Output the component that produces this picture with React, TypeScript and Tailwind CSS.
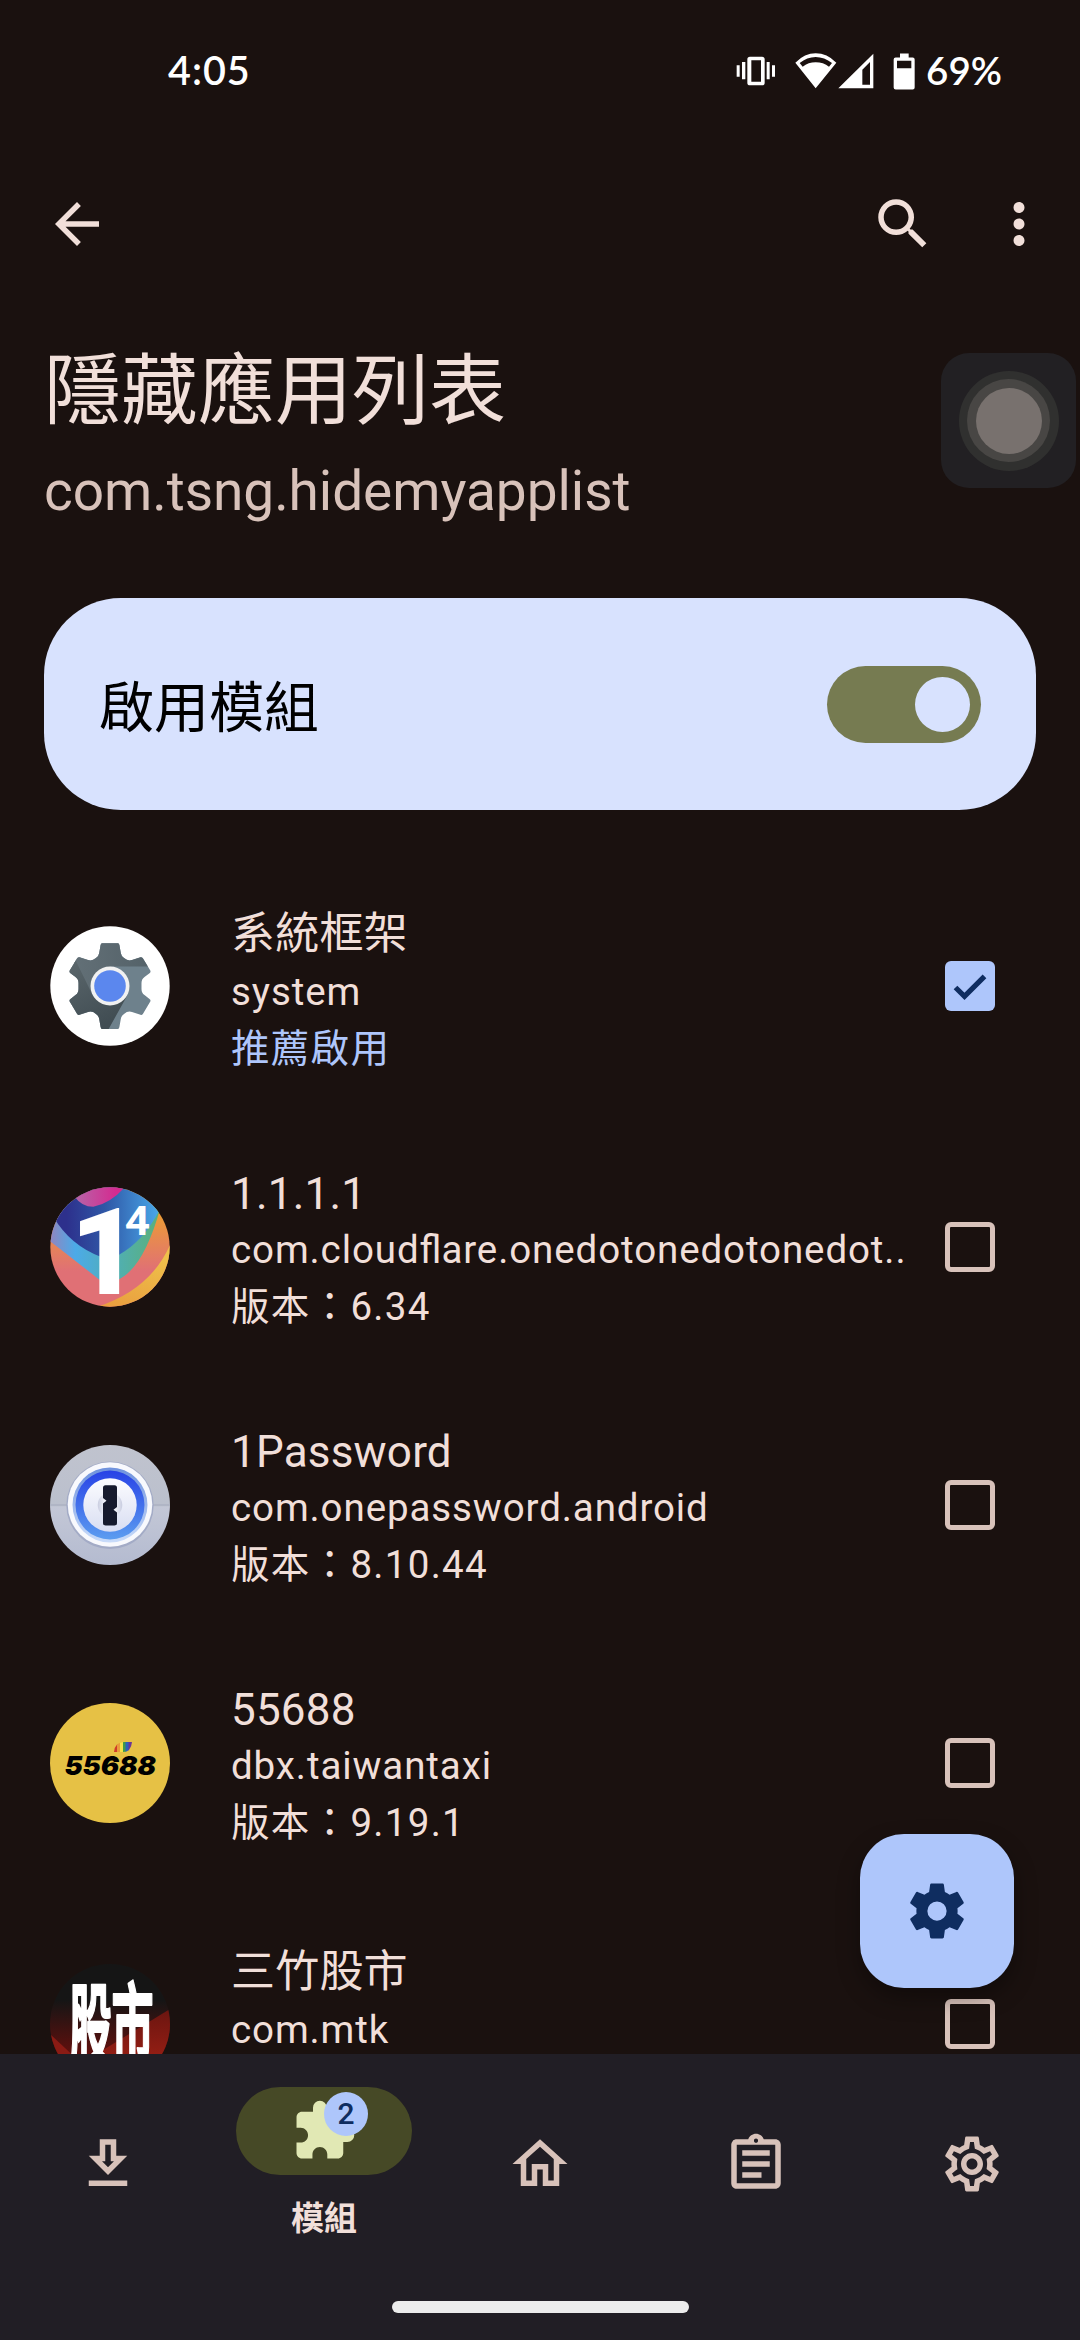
import type { ReactNode } from "react";
import { MdArrowBack, MdSearch, MdMoreVert, MdExtension, MdOutlineAssignment, MdOutlineSettings } from "react-icons/md";

const COG =
  "M12,15.5A3.5,3.5 0 0,1 8.5,12A3.5,3.5 0 0,1 12,8.5A3.5,3.5 0 0,1 15.5,12A3.5,3.5 0 0,1 12,15.5M19.43,12.97C19.47,12.65 19.5,12.33 19.5,12C19.5,11.67 19.47,11.34 19.43,11L21.54,9.37C21.73,9.22 21.78,8.95 21.66,8.73L19.66,5.27C19.54,5.05 19.27,4.96 19.05,5.05L16.56,6.05C16.04,5.66 15.5,5.32 14.87,5.07L14.5,2.42C14.46,2.18 14.25,2 14,2H10C9.75,2 9.54,2.18 9.5,2.42L9.13,5.07C8.5,5.32 7.96,5.66 7.44,6.05L4.95,5.05C4.73,4.96 4.46,5.05 4.34,5.27L2.34,8.73C2.21,8.95 2.27,9.22 2.46,9.37L4.57,11C4.53,11.34 4.5,11.67 4.5,12C4.5,12.33 4.53,12.65 4.57,12.97L2.46,14.63C2.27,14.78 2.21,15.05 2.34,15.27L4.34,18.73C4.46,18.95 4.73,19.03 4.95,18.95L7.44,17.94C7.96,18.34 8.5,18.68 9.13,18.93L9.5,21.58C9.54,21.82 9.75,22 10,22H14C14.25,22 14.46,21.82 14.5,21.58L14.87,18.93C15.5,18.67 16.04,18.34 16.56,17.94L19.05,18.95C19.27,19.03 19.54,18.95 19.66,18.73L21.66,15.27C21.78,15.05 21.73,14.78 21.54,14.63L19.43,12.97Z";

function StatusBar() {
  return (
    <header className="flex h-[142px] shrink-0 items-center justify-between pl-[168px] pr-[78px] text-white">
      <span className="pb-[2px] font-[Lato] text-[39.5px] font-semibold leading-none tracking-[1px]">4:05</span>
      <div className="flex items-center">
        <svg viewBox="108 78 120 90" className="h-[30px] w-[40px] fill-white">
          <path fillRule="evenodd" d="M150 80h36a8 8 0 0 1 8 8v70a8 8 0 0 1-8 8h-36a8 8 0 0 1-8-8v-70a8 8 0 0 1 8-8zm4 11v64h29v-64z" />
          <path d="M110 106h9v34h-9zM126 96h10v52h-10zM200 96h9v52h-9zM216 106h9v34h-9z" />
        </svg>
        <svg viewBox="284 68 126 108" className="ml-[19px] h-[36px] w-[42px] fill-white">
          <path fillRule="evenodd" d="M285 97Q313 69 346 69Q380 69 408 97L346 174zM298 98L307 109Q324 96 346 96Q369 96 386 109L395 98Q372 80 346 80Q320 80 298 98z" />
        </svg>
        <svg viewBox="416 68 108 108" className="ml-[1px] h-[36px] w-[36px] fill-white">
          <path fillRule="evenodd" d="M417 174L522 70V174zM489 118V163H512V95z" />
        </svg>
        <svg viewBox="580 68 66 110" className="ml-[19px] h-[37px] w-[22px] fill-white">
          <path fillRule="evenodd" d="M601 69h26v12h12a6 6 0 0 1 6 6v84a6 6 0 0 1-6 6h-51a6 6 0 0 1-6-6V87a6 6 0 0 1 6-6h13zM592 91v22h43V91z" />
        </svg>
        <span className="ml-[11px] pb-[2px] font-[Lato] text-[38.5px] font-semibold leading-none">69%</span>
      </div>
    </header>
  );
}

function SystemIcon() {
  return (
    <svg viewBox="0 0 120 120" className="size-[120px]">
      <defs>
        <clipPath id="gear">
          <path d="M52 17.3H68Q69 17.3 69.4 19L70.8 27Q71.3 30.5 74 32Q78 35.5 82 34L90.5 31.2Q92 31 93 32.5L100.3 44.5Q101 46 99.5 47.2L94.5 51Q91.5 53 91.5 57V63Q91.5 67 94.5 69L99.5 73Q101 74 100.3 75.6L93 87.7Q92 89.2 90.5 88.8L82 86Q78 84.5 74 88Q71.3 89.5 70.8 93L69.4 101Q69 103 68 103H52Q51 103 50.6 101L49.2 93Q48.7 89.5 46 88Q42 84.5 38 86L29.5 88.8Q28 89.2 27 87.7L19.7 75.6Q19 74 20.5 73L25.5 69Q28.5 67 28.5 63V57Q28.5 53 25.5 51L20.5 47.2Q19 46 19.7 44.5L27 32.5Q28 31 29.5 31.2L38 34Q42 35.5 46 32Q48.7 30.5 49.2 27L50.6 19Q51 17.3 52 17.3z" />
        </clipPath>
        <linearGradient id="gearTop" x1="0" x2="1">
          <stop offset="0" stopColor="#67747b" />
          <stop offset="1" stopColor="#505e65" />
        </linearGradient>
        <linearGradient id="gearLeft" x1="0" y1="0" x2=".5" y2="1">
          <stop offset="0" stopColor="#5f6b70" />
          <stop offset="1" stopColor="#414d53" />
        </linearGradient>
      </defs>
      <circle cx="60" cy="60" r="59.7" fill="#fff" />
      <g clipPath="url(#gear)">
        <rect width="120" height="120" fill="#6e818c" />
        <path d="M0 0H120V40.500H60L43 70L20 30z" fill="url(#gearTop)" />
        <path d="M24 31L43 70L77 70L57 106H0V30z" fill="url(#gearLeft)" />
      </g>
      <circle cx="60" cy="60" r="19.500" fill="#f1f1f1" />
      <circle cx="60" cy="60" r="15.800" fill="#5b87ee" />
    </svg>
  );
}

function CloudflareIcon() {
  return (
    <svg viewBox="60 51 360 360" className="size-[120px]">
      <defs>
        <clipPath id="cf">
          <circle cx="240" cy="231" r="179" />
        </clipPath>
        <linearGradient id="cfBase" x1="0" y1="0" x2="0" y2="1">
          <stop offset=".25" stopColor="#ec9a38" />
          <stop offset=".7" stopColor="#e07075" />
        </linearGradient>
        <linearGradient id="cfBlue" x1="0" x2="1">
          <stop offset=".15" stopColor="#2d308c" />
          <stop offset=".5" stopColor="#2f57a6" />
          <stop offset="1" stopColor="#4aa9ea" />
        </linearGradient>
        <linearGradient id="cfBand" x1="0" x2="1">
          <stop offset="0" stopColor="#9a80ba" />
          <stop offset=".25" stopColor="#4caae8" />
          <stop offset=".6" stopColor="#50afb4" />
          <stop offset="1" stopColor="#5bb078" />
        </linearGradient>
        <linearGradient id="cfPink" x1="0" x2="1">
          <stop offset="0" stopColor="#b765a8" />
          <stop offset=".8" stopColor="#d42b90" />
        </linearGradient>
        <linearGradient id="cfYellow" x1="0" y1="1" x2=".4" y2="0">
          <stop offset="0" stopColor="#e99c3e" />
          <stop offset="1" stopColor="#efc04a" />
        </linearGradient>
      </defs>
      <g clipPath="url(#cf)">
        <rect x="60" y="51" width="360" height="360" fill="url(#cfBase)" />
        <path d="M200 411Q360 360 420 225V411z" fill="url(#cfYellow)" />
        <path d="M50 206Q80 228 212 332H258Q340 300 392 110L60 90z" fill="url(#cfBand)" />
        <path d="M70 140Q120 225 212 260Q240 265 266 255Q340 215 390 118L360 51H60z" fill="url(#cfBlue)" />
        <path d="M134 80Q155 110 190 110Q240 102 288 48H134z" fill="url(#cfPink)" />
      </g>
      <text transform="translate(120.500 371) scale(1.067 1)" className="fill-white font-[Roboto] text-[361px] font-black" textLength="195" lengthAdjust="spacingAndGlyphs">1</text>
      <text x="284" y="194" className="fill-white font-[Roboto] text-[124px] font-bold" textLength="76" lengthAdjust="spacingAndGlyphs">4</text>
    </svg>
  );
}

function OnePasswordIcon() {
  return (
    <svg viewBox="0 0 120 120" className="size-[120px]">
      <defs>
        <linearGradient id="opBg" x1="0" y1="0" x2="0" y2="1">
          <stop offset="0" stopColor="#c0c3ce" />
          <stop offset=".5" stopColor="#bbc0cd" />
          <stop offset=".52" stopColor="#c3c7d6" />
          <stop offset="1" stopColor="#b4bbd0" />
        </linearGradient>
        <linearGradient id="opRing" x1="0" y1="0" x2="0" y2="1">
          <stop offset="0" stopColor="#2842e6" />
          <stop offset="1" stopColor="#5c9df0" />
        </linearGradient>
        <linearGradient id="opEdge" x1="0" y1="0" x2="0" y2="1">
          <stop offset="0" stopColor="#6f92dd" />
          <stop offset="1" stopColor="#c9dcfa" />
        </linearGradient>
        <linearGradient id="opFace" x1="0" y1="0" x2="0" y2="1">
          <stop offset="0" stopColor="#fcfcff" />
          <stop offset="1" stopColor="#d9def2" />
        </linearGradient>
        <linearGradient id="opHole" x1="0" x2="1">
          <stop offset="0" stopColor="#c9cde0" />
          <stop offset=".3" stopColor="#f2f3fa" />
          <stop offset=".7" stopColor="#f2f3fa" />
          <stop offset="1" stopColor="#c9cde0" />
        </linearGradient>
      </defs>
      <circle cx="60" cy="60" r="60" fill="url(#opBg)" />
      <path d="M0 60H120" stroke="#a4aabc" strokeWidth="1" />
      <circle cx="60" cy="60.300" r="43.700" fill="#a3abc6" />
      <circle cx="60" cy="59.500" r="42.300" fill="#f8f9fd" />
      <circle cx="60" cy="60" r="37.500" fill="url(#opEdge)" />
      <circle cx="60" cy="60" r="34.500" fill="url(#opRing)" />
      <circle cx="60" cy="60" r="26.700" fill="url(#opFace)" />
      <circle cx="60" cy="60" r="12.300" fill="url(#opHole)" />
      <path d="M55.500 40.300h9q2.500 0 2.500 2.500v19.200l-3.500 2.700 3.500 2.700v10.600q0 2.500-2.500 2.500h-9q-2.500 0-2.500-2.500V58.500l3.500-2.700-3.500-2.700V42.800q0-2.500 2.500-2.500z" fill="#161a2d" />
    </svg>
  );
}

function TaxiIcon() {
  return (
    <svg viewBox="0 0 120 120" className="size-[120px]">
      <defs>
        <clipPath id="leaf">
          <path d="M64 49Q65 39 74 39H82Q81 49 73 49z" />
        </clipPath>
      </defs>
      <circle cx="60" cy="60" r="60" fill="#e6c145" />
      <g clipPath="url(#leaf)">
        <rect x="64" y="39" width="3.500" height="10" fill="#cf3b2b" />
        <rect x="67" y="39" width="3.500" height="10" fill="#e89a3a" />
        <rect x="70" y="39" width="3.500" height="10" fill="#f3e24a" />
        <rect x="73" y="39" width="3" height="10" fill="#3f9a4a" />
        <rect x="75.500" y="39" width="3.500" height="10" fill="#2c62b8" />
        <rect x="78.500" y="39" width="4" height="10" fill="#6a3598" />
      </g>
      <text x="14.500" y="72" className="fill-black font-[Inter] text-[26px] font-black italic" textLength="91.500" lengthAdjust="spacingAndGlyphs">55688</text>
    </svg>
  );
}

function StockIcon() {
  return (
    <svg viewBox="0 0 120 120" className="size-[120px]">
      <defs>
        <clipPath id="st">
          <circle cx="60" cy="60" r="60" />
        </clipPath>
        <linearGradient id="stBg" x1="0" y1="0" x2="0" y2="1">
          <stop offset=".3" stopColor="#151515" />
          <stop offset=".8" stopColor="#6a0f0c" />
        </linearGradient>
        <linearGradient id="stRed" x1="0" y1="0" x2="0" y2="1">
          <stop offset="0" stopColor="#6b1510" />
          <stop offset="1" stopColor="#ab2316" />
        </linearGradient>
      </defs>
      <g clipPath="url(#st)">
        <rect width="120" height="120" fill="url(#stBg)" />
        <path d="M120 45L40 94V120H120z" fill="url(#stRed)" />
        <path d="M0 70L30 98V120H0z" fill="#8a1b14" />
      </g>
      <text transform="translate(19.500 96) scale(1 2.180)" className="fill-white stroke-white font-['Noto_Sans_CJK_TC'] text-[42px] font-bold" strokeWidth="1" strokeLinejoin="round">股市</text>
    </svg>
  );
}

function Checkbox({ checked }: { checked?: boolean }) {
  return checked ? (
    <span className="flex size-[50px] items-center justify-center rounded-[6px] bg-[#aec6fb]">
      <svg viewBox="0 0 50 50" className="size-[50px]" fill="none" stroke="#0f2d60" strokeWidth="5.200">
        <path d="M10.500 26.500L19.500 35.300L39.500 15.300" />
      </svg>
    </span>
  ) : (
    <span className="size-[50px] rounded-[6px] border-[5.500px] border-[#d8c2ba]" />
  );
}

type RowProps = { icon: ReactNode; title: string; pkg: ReactNode; note: string; cjk?: boolean; recommended?: boolean };

function AppRow({ icon, title, pkg, note, cjk, recommended }: RowProps) {
  return (
    <li className={`flex shrink-0 items-center pl-[50px] pr-[85px] ${cjk ? "h-[264px]" : "h-[258px]"}`}>
      {icon}
      <div className={`ml-[61px] flex-1 whitespace-nowrap ${cjk ? "pt-[11px]" : "pt-[8px]"}`}>
        <p className={`text-[44px] ${cjk ? "leading-[57px] tracking-[0.2px]" : "leading-[54px] tracking-[0.2px]"}`}>{title}</p>
        <p className="text-[38.5px] leading-[57px] tracking-[0.9px]">{pkg}</p>
        <p className={`text-[38.5px] leading-[57px] tracking-[1.3px] ${recommended ? "text-[#aec6fb]" : ""}`}>{note}</p>
      </div>
      <Checkbox checked={recommended} />
    </li>
  );
}

function NavIcon({ children }: { children: ReactNode }) {
  return <div className="flex w-[216px] justify-center pt-[77px] text-[66px] text-[#d8c2ba]">{children}</div>;
}

export default function App() {
  return (
    <div className="relative flex h-[2340px] w-[1080px] flex-col overflow-hidden bg-[#1a110f] font-[Roboto,'Noto_Sans_CJK_TC',sans-serif] text-[#f1dfd9]">
      <StatusBar />
      <div className="flex h-[164px] shrink-0 items-center pl-[44px] pr-[28px] text-[66px]">
        <MdArrowBack />
        <MdSearch className="ml-auto" />
        <MdMoreVert className="ml-[50px]" />
      </div>
      <div className="h-[292px] shrink-0 px-[44px] pt-[34px]">
        <h1 className="text-[77px] leading-[104px]">隱藏應用列表</h1>
        <p className="pt-[13px] text-[55px] leading-[68px] tracking-[-0.05px] text-[#d8c2ba]">com.tsng.hidemyapplist</p>
      </div>
      <div className="mx-[44px] flex h-[212px] shrink-0 items-center rounded-[77px] bg-[#d8e2fe] pl-[55px] pr-[55px] text-black">
        <span className="pt-[8px] text-[55px] leading-[70px]">啟用模組</span>
        <span className="ml-auto flex h-[77px] w-[154px] items-center justify-end rounded-full bg-[#767b51] pr-[11px]">
          <span className="size-[55px] rounded-full bg-[#d8e2fe]" />
        </span>
      </div>
      <ul className="mt-[44px] flex min-h-0 flex-1 flex-col overflow-hidden">
        <AppRow icon={<SystemIcon />} title="系統框架" pkg="system" note="推薦啟用" cjk recommended />
        <AppRow
          icon={<CloudflareIcon />}
          title="1.1.1.1"
          pkg={<>com.cloud<span className="tracking-normal">fl</span>are.onedotonedotonedot..</>}
          note="版本：6.34"
        />
        <AppRow icon={<OnePasswordIcon />} title="1Password" pkg="com.onepassword.android" note="版本：8.10.44" />
        <AppRow icon={<TaxiIcon />} title="55688" pkg="dbx.taiwantaxi" note="版本：9.19.1" />
        <AppRow icon={<StockIcon />} title="三竹股市" pkg="com.mtk" note="版本：" cjk />
      </ul>
      <nav className="h-[286px] shrink-0 bg-[#211e25]">
        <div className="flex h-[247px]">
          <NavIcon>
            <svg viewBox="0 0 24 24" className="size-[66px] fill-current">
              <path d="M19 9h-4V3H9v6H5l7 7 7-7zm-8 2V5h2v6h1.170L12 13.170 9.830 11H11zm-6 7h14v2H5z" />
            </svg>
          </NavIcon>
          <div className="flex w-[216px] flex-col items-center pt-[33px]">
            <div className="relative flex h-[88px] w-[176px] items-center justify-center rounded-full bg-[#464926]">
              <MdExtension className="size-[66px] text-[#e1e8b4]" />
              <span className="absolute left-[88px] top-[5px] flex size-[44px] items-center justify-center rounded-full bg-[#aec6fb] text-[30px] font-medium leading-none text-[#0f2d60]">2</span>
            </div>
            <span className="mt-[21px] text-[33px] font-bold leading-[46px]">模組</span>
          </div>
          <NavIcon>
            <svg viewBox="0 0 24 24" className="size-[66px] fill-current">
              <path d="M12 5.690l5 4.500V18h-2v-6H9v6H7v-7.810l5-4.500M12 3L2 12h3v8h6v-6h2v6h6v-8h3L12 3z" />
            </svg>
          </NavIcon>
          <NavIcon>
            <MdOutlineAssignment />
          </NavIcon>
          <NavIcon>
            <MdOutlineSettings />
          </NavIcon>
        </div>
        <div className="mx-auto h-[12px] w-[297px] rounded-full bg-[#ececec]" />
      </nav>

      <button className="absolute left-[860px] top-[1834px] flex size-[154px] items-center justify-center rounded-[44px] bg-[#aec6fb] shadow-[0_10px_22px_rgba(0,0,0,0.35)]">
        <svg viewBox="0 0 24 24" className="size-[66px] fill-[#0f2d60]">
          <path d={COG} />
        </svg>
      </button>
      <div className="absolute left-[941px] top-[353px] flex size-[135px] items-center justify-center rounded-[28px] bg-[#222023]">
        <div className="flex size-[100px] items-center justify-center rounded-full bg-[#30302f]">
          <div className="flex size-[83px] items-center justify-center rounded-full bg-[#484644]">
            <div className="size-[66px] rounded-full bg-[#78716e]" />
          </div>
        </div>
      </div>
    </div>
  );
}
